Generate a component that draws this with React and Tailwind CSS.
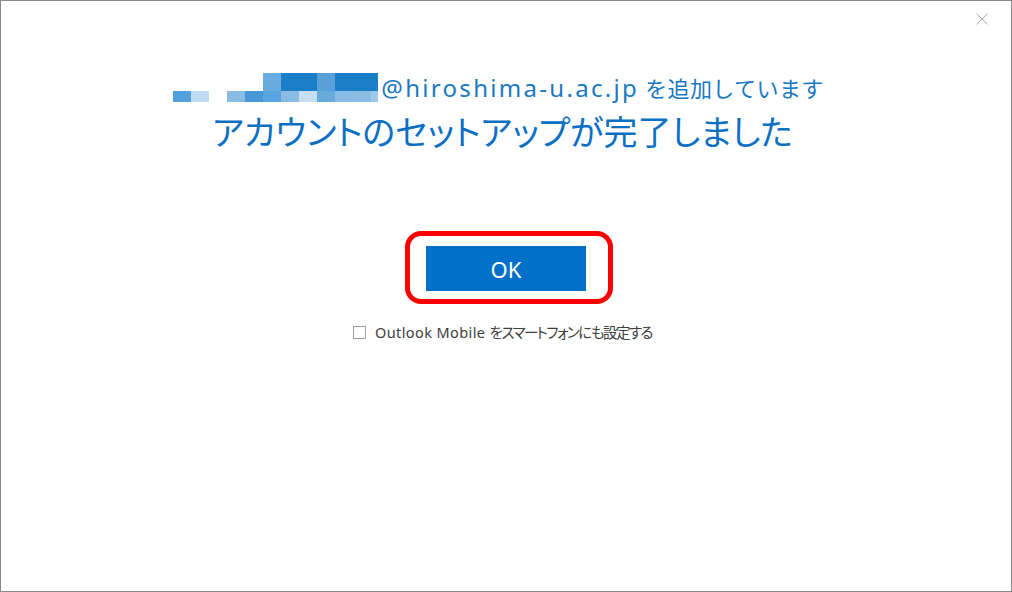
import React from "react";

const topRow = [
  { w: 90, c: "transparent" },
  { w: 18, c: "#6aacdf" },
  { w: 36, c: "#1a7ec8" },
  { w: 18, c: "#5aa0d8" },
  { w: 43, c: "#1a7ec8" },
];
const bottomRow = [
  { w: 18, c: "#52a0dc" },
  { w: 18, c: "#c0dcf2" },
  { w: 18, c: "transparent" },
  { w: 18, c: "#88bce4" },
  { w: 18, c: "#4897d8" },
  { w: 18, c: "#5aa3dc" },
  { w: 18, c: "#88bce4" },
  { w: 18, c: "#c6e0f2" },
  { w: 18, c: "#68aadc" },
  { w: 18, c: "#88bce4" },
  { w: 18, c: "#8cbee4" },
  { w: 7, c: "#a0c8ea" },
];

function Mosaic() {
  return (
    <div className="flex flex-col w-[205px] shrink-0">
      <div className="flex h-[18px]">
        {topRow.map((b, i) => (
          <div key={i} className="h-full" style={{ width: b.w, background: b.c }} />
        ))}
      </div>
      <div className="flex h-[11px]">
        {bottomRow.map((b, i) => (
          <div key={i} className="h-full" style={{ width: b.w, background: b.c }} />
        ))}
      </div>
    </div>
  );
}

export default function App() {
  const font = "font-['Noto_Sans','Noto_Sans_CJK_JP',sans-serif]";
  return (
    <div className={`w-[1012px] h-[592px] border border-[#888888] bg-white flex flex-col ${font}`}>
      <div className="flex justify-end pt-[12px] pr-[23px]">
        <svg width="12" height="12" viewBox="0 0 12 12" className="block">
          <path d="M0.5 0.5L11.5 11.5M11.5 0.5L0.5 11.5" stroke="#a6a6a6" strokeWidth="1" fill="none" />
        </svg>
      </div>
      <div className="flex flex-col items-center">
        <div className="mt-[48px] flex items-start ml-[-15px]">
          <Mosaic />
          <div className="ml-[3px] text-[22px] leading-[30px] text-[#1a78c4] whitespace-nowrap">
            <span className="text-[24px] tracking-[2.3px]">@hiroshima-u.ac.jp</span>
            <span className="tracking-[0.4px]"> を追加しています</span>
          </div>
        </div>
        <div className="mt-[6px] ml-[-7px] text-[34px] leading-[46px] text-[#0b70c4] whitespace-nowrap [font-feature-settings:'palt']">
          アカウントのセットアップが完了しました
        </div>
        <div className="relative mt-[91px]">
          <button className="w-[160px] h-[45px] bg-[#0070c8] text-white text-[22px] leading-none flex items-center justify-center">
            OK
          </button>
          <div className="absolute left-[-21px] top-[-15px] w-[208px] h-[73px] border-[5px] border-[#ff0000] rounded-[16px] pointer-events-none" />
        </div>
        <div className="mt-[31px] ml-[-7px] flex items-center">
          <div className="w-[13px] h-[13px] border border-[#a0a0a0] bg-white" />
          <span className="ml-[9px] text-[14.5px] leading-[20px] text-[#404040] whitespace-nowrap">
            <span className="tracking-[0.4px]">Outlook Mobile </span>
            <span className="tracking-[-1.5px] [font-feature-settings:'palt']">をスマートフォンにも設定する</span>
          </span>
        </div>
      </div>
    </div>
  );
}
